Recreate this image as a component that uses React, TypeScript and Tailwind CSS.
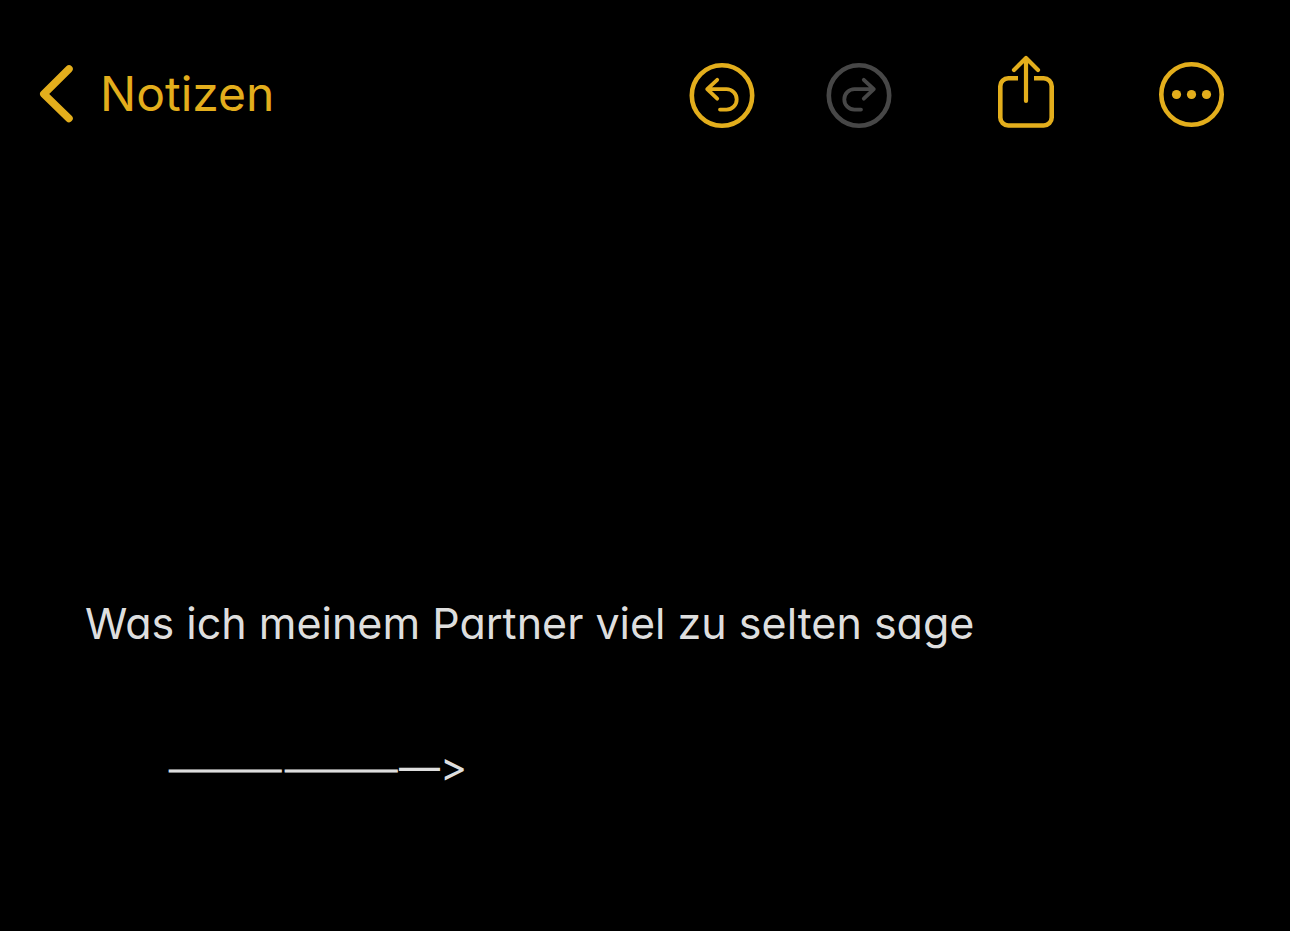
import React from 'react';

const UndoIcon = ({ className = '' }: { className?: string }) => (
  <svg viewBox="0 0 66 66" fill="none" stroke="currentColor" strokeLinecap="round" strokeLinejoin="round" className={className} aria-hidden="true">
    <circle cx="33" cy="32.5" r="30.2" strokeWidth="4.6" />
    <path d="M28.2 16.8 18.2 26.2 28.2 35.7M19 26.2H37.5a10.2 10.2 0 0 1 0 20.4H31" strokeWidth="3.8" />
  </svg>
);

const ShareIcon = () => (
  <svg viewBox="-1 0 59 74" fill="none" stroke="currentColor" strokeLinecap="round" strokeLinejoin="round" className="h-[74px] w-[59px]" aria-hidden="true">
    <path d="M21 23.3H11.3a8 8 0 0 0-8 8V62.5a8 8 0 0 0 8 8H46.7a8 8 0 0 0 8-8V31.3a8 8 0 0 0-8-8H37" strokeWidth="4.6" strokeLinecap="butt" />
    <path d="M29 4V46M17 15 29 3 41 15" strokeWidth="4.2" />
  </svg>
);

const MoreIcon = () => (
  <svg viewBox="0 0 66 66" fill="none" className="size-[66px]" aria-hidden="true">
    <circle cx="32.5" cy="33.5" r="30.2" stroke="currentColor" strokeWidth="4.6" />
    <circle cx="17.5" cy="33.5" r="4.6" fill="currentColor" />
    <circle cx="32.5" cy="33.5" r="4.6" fill="currentColor" />
    <circle cx="47.5" cy="33.5" r="4.6" fill="currentColor" />
  </svg>
);

const App: React.FC = () => {
  return (
    <div className="min-h-screen bg-black font-['Inter',sans-serif] text-[#dedede]">
      <header className="flex items-center justify-between pt-[55px] pr-[65px] pl-9 text-[#e3ae1c]">
        <button type="button" className="flex items-center gap-6 text-[48px] leading-[60px]">
          <svg viewBox="0 0 40 60" fill="none" stroke="currentColor" strokeWidth="7.5" strokeLinecap="round" strokeLinejoin="round" className="h-[60px] w-10" aria-hidden="true">
            <path d="M33 5 7.8 30 33 54.5" />
          </svg>
          Notizen
        </button>

        <div className="flex items-center gap-[104px]">
          <div className="flex items-center gap-[71px] pt-1">
            <button type="button" aria-label="Widerrufen">
              <UndoIcon className="size-[66px]" />
            </button>
            <button type="button" aria-label="Wiederholen" disabled className="text-[#474747]">
              <UndoIcon className="size-[66px] -scale-x-100" />
            </button>
          </div>
          <button type="button" aria-label="Teilen" className="pb-1">
            <ShareIcon />
          </button>
          <button type="button" aria-label="Mehr">
            <MoreIcon />
          </button>
        </div>
      </header>

      <main className="px-[85px] pt-[463px] leading-[54px] [font-feature-settings:'cv11','calt'_0]">
        <p className="text-[43px]">Was ich meinem Partner viel zu selten sage</p>
        <p className="mt-[90px] pl-[82px] text-[41px]">⸻⸻—&gt;</p>
      </main>
    </div>
  );
};

export default App;
